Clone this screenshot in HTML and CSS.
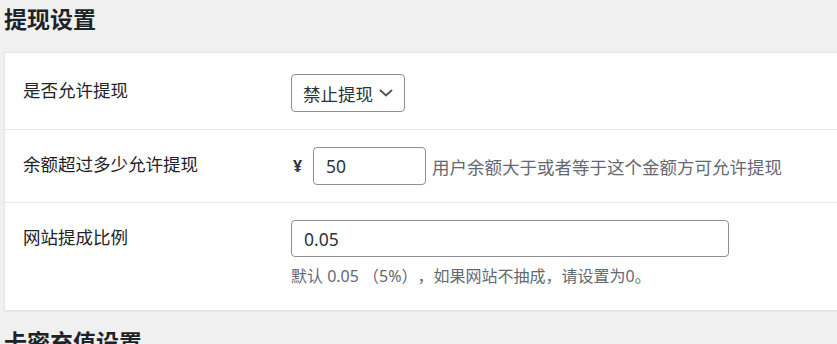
FILE: index.html
```html
<!DOCTYPE html>
<html lang="zh-CN">
<head>
    <meta charset="UTF-8">
    <meta name="viewport" content="width=device-width, initial-scale=1.0">
    <title>提现设置</title>
    <link rel="stylesheet" href="styles.css">
</head>
<body>

<div class="wrap">
    <h2 class="titulo">提现设置</h2>

    <div class="cartao">
        <div class="linha linha-primeira">
            <div class="rotulo">是否允许提现</div>
            <div class="campo">
                <div class="seletor">
                    <span>禁止提现</span>
                    <svg width="14" height="8" viewBox="0 0 14 8"><path d="M1 1 L7 6.5 L13 1" fill="none" stroke="#50575e" stroke-width="2"/></svg>
                </div>
            </div>
        </div>

        <div class="linha">
            <div class="rotulo">余额超过多少允许提现</div>
            <div class="campo campo-inline">
                <span class="moeda">¥</span>
                <input type="text" class="entrada entrada-curta" value="50">
                <span class="dica">用户余额大于或者等于这个金额方可允许提现</span>
            </div>
        </div>

        <div class="linha linha-ultima">
            <div class="rotulo">网站提成比例</div>
            <div class="campo">
                <input type="text" class="entrada entrada-longa" value="0.05">
                <p class="descricao">默认 0.05 （5%），如果网站不抽成，请设置为0。</p>
            </div>
        </div>
    </div>

    <h2 class="titulo titulo-seguinte">卡密充值设置</h2>
</div>

</body>
</html>
```

FILE: styles.css
```css
body {
    margin: 0;
    background-color: #f0f0f1;
    font-family: "Noto Sans", "Noto Sans CJK SC", sans-serif;
    color: #1d2327;
    overflow: hidden;
    text-spacing-trim: space-all;
}
.wrap {
    padding-left: 4px;
}
.titulo {
    margin: 4px 0 0 0;
    font-size: 23px;
    line-height: 30px;
    font-weight: 700;
    color: #1d2327;
}
.titulo-seguinte {
    margin-top: 16px;
}
.cartao {
    margin-top: 18px;
    background-color: #fff;
    border: 1px solid #e4e4e4;
    border-right: none;
    box-shadow: 0 1px 1px rgba(0, 0, 0, 0.04);
}
.linha {
    display: flex;
    align-items: flex-start;
    padding: 17px 0 17px 0;
    border-bottom: 1px solid #e8e8e8;
}
.linha-primeira {
    padding-top: 21px;
}
.linha-ultima {
    border-bottom: none;
    padding-bottom: 23px;
}
.rotulo {
    width: 268px;
    padding-left: 18px;
    margin-top: 4px;
    font-size: 17.5px;
    line-height: 26px;
}
.linha-primeira .rotulo {
    margin-top: 3px;
}
.campo {
    flex: 1;
}
.campo-inline {
    display: flex;
    align-items: center;
}
.seletor {
    display: inline-flex;
    align-items: center;
    gap: 6px;
    box-sizing: border-box;
    height: 38px;
    padding: 0 11px 0 11px;
    border: 1px solid #8c8f94;
    border-radius: 4px;
    font-size: 17.5px;
    white-space: nowrap;
    color: #2c3338;
}
.seletor svg {
    flex-shrink: 0;
}
.moeda {
    width: 20px;
    padding-left: 2px;
    font-size: 16px;
    font-weight: 700;
    color: #2c3338;
}
.entrada {
    box-sizing: border-box;
    height: 38px;
    padding: 0 12px;
    border: 1px solid #8c8f94;
    border-radius: 4px;
    font-family: "Noto Sans", "Noto Sans CJK SC", sans-serif;
    font-size: 17.5px;
    color: #2c3338;
    background-color: #fff;
}
.entrada-curta {
    width: 113px;
}
.entrada-longa {
    width: 438px;
    height: 37px;
    display: block;
}
.dica {
    margin-left: 6px;
    font-size: 17.5px;
    color: #646970;
}
.descricao {
    margin: 8px 0 0 0;
    font-size: 16px;
    line-height: 22px;
    color: #646970;
}
```
